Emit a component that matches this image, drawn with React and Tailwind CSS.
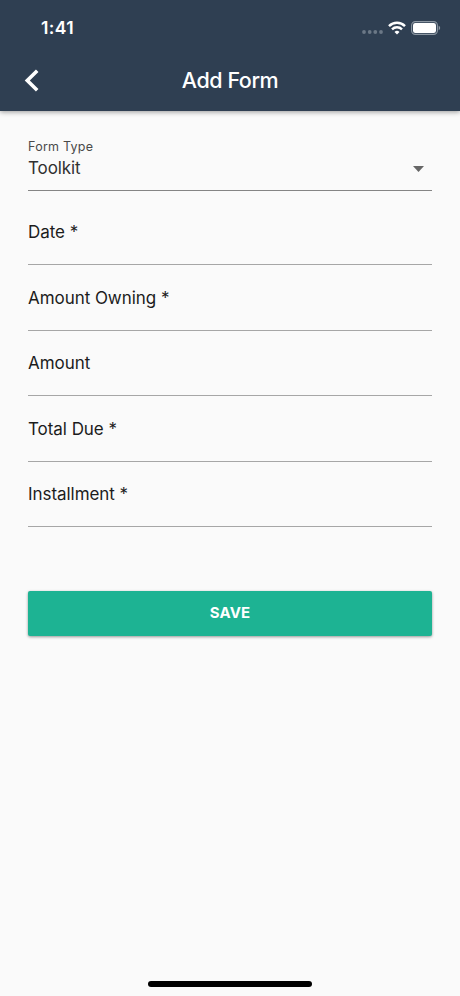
// Add Form screen: status bar, title bar, form fields and the save button.
import React from "react";

const fields = ["Date *", "Amount Owning *", "Amount", "Total Due *", "Installment *"];

function StatusBar() {
  return (
    <div className="flex h-[55px] items-center justify-between pr-[19px] pl-[41px]">
      <span className="pt-px text-[17.5px] leading-none font-semibold tracking-[0.4px]">1:41</span>
      <div className="flex items-center">
        <svg width="21" height="6" viewBox="0 0 21 6" fill="#6b7886" className="mt-[9px]" aria-hidden="true">
          <circle cx="2" cy="3" r="1.9" />
          <circle cx="7.7" cy="3" r="1.9" />
          <circle cx="13.3" cy="3" r="1.9" />
          <circle cx="19" cy="3" r="1.9" />
        </svg>
        <svg width="18" height="14" viewBox="0 0 18 14" fill="none" stroke="#fff" strokeWidth="2.5" className="ml-[5px]" aria-hidden="true">
          <path d="M1 5.1a11.5 11.5 0 0 1 16 0" />
          <path d="M4 8.3a7.3 7.3 0 0 1 10 0" />
          <path d="M9 13.4 6.5 10.9a3.7 3.7 0 0 1 5 0Z" fill="#fff" stroke="none" />
        </svg>
        <svg width="30" height="14" viewBox="0 0 30 14" className="ml-[5px]" aria-hidden="true">
          <rect x="0.6" y="0.6" width="25.8" height="12.8" rx="3.8" fill="none" stroke="#8d98a3" strokeWidth="1.1" />
          <rect x="2" y="2" width="23" height="10" rx="2.3" fill="#fff" />
          <path d="M27.7 4.8c1.9.7 1.9 3.7 0 4.4Z" fill="#8d98a3" />
        </svg>
      </div>
    </div>
  );
}

function Header() {
  return (
    <header className="h-[111px] bg-[#2f3f52] text-white shadow-[0_1px_5px_rgba(0,0,0,0.4)]">
      <StatusBar />
      <div className="grid h-[51px] grid-cols-[60px_1fr_60px] items-center">
        <button type="button" aria-label="Back" className="pl-[24px]">
          <svg width="15" height="23" viewBox="0 0 15 23" fill="none" stroke="#fff" strokeWidth="3.6">
            <path d="M13.2 1.8 3.3 11.5l9.9 9.7" />
          </svg>
        </button>
        <h1 className="text-center text-[21.5px] leading-none font-medium tracking-[-0.45px]">Add Form</h1>
      </div>
    </header>
  );
}

export default function App() {
  return (
    <div className="flex h-[996px] w-[460px] flex-col bg-[#fafafa] font-['Inter',sans-serif] text-[#1c1c1c]">
      <Header />
      <main className="flex flex-1 flex-col px-[28px]">
        <div className="h-[79.5px] border-b border-[#858585] pt-[28px]">
          <p className="text-[12.5px] leading-[16px] tracking-[0.25px] text-[#4a4a4a]">Form Type</p>
          <div className="flex h-[27px] items-center justify-between pr-[8px] text-[17px] tracking-[-0.1px] text-[#303030]">
            <span className="pt-px">Toolkit</span>
            <svg width="11" height="6" viewBox="0 0 11 6" fill="#666" aria-hidden="true">
              <path d="M0 0h11L5.5 6Z" />
            </svg>
          </div>
        </div>
        <div className="mt-[9px]">
          {fields.map((label) => (
            <div key={label} className="h-[65.5px] border-b border-[#a6a6a6] pt-[20.5px] text-[17px] leading-[24px] tracking-[-0.05px]">
              {label}
            </div>
          ))}
        </div>
        <button type="button" className="mt-[64px] h-[45px] rounded-[2px] bg-[#1db393] text-[15px] font-bold tracking-[0.2px] text-white shadow-[0_1px_3px_rgba(0,0,0,0.4)]">
          SAVE
        </button>
      </main>
      <footer className="flex justify-center pb-[9px]">
        <div className="h-[6px] w-[164px] rounded-full bg-black" />
      </footer>
    </div>
  );
}
